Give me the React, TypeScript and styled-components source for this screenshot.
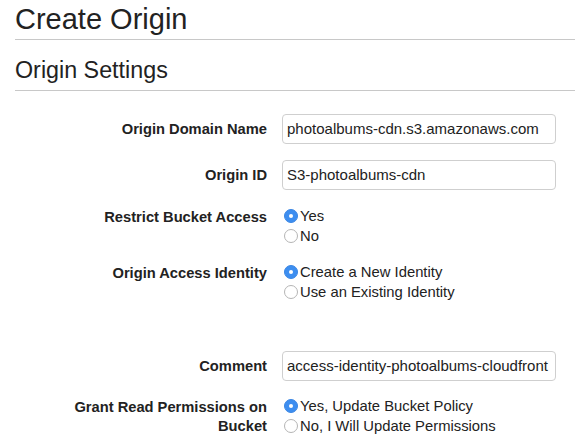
import React from "react";
import styled, { createGlobalStyle } from "styled-components";

const Global = createGlobalStyle`
  html, body { margin: 0; padding: 0; background: #ffffff; }
  body { font-family: "Liberation Sans", Arial, sans-serif; color: #222; }
`;

const Page = styled.div`
  width: 575px;
  height: 444px;
  overflow: hidden;
  padding-left: 15px;
  box-sizing: border-box;
`;

const Title = styled.h1`
  margin: 0;
  padding-top: 2px;
  height: 37px;
  font-size: 29px;
  font-weight: normal;
  line-height: 34px;
  color: #222;
  border-bottom: 1px solid #c8c8c8;
`;

const SectionTitle = styled.h2`
  margin: 0;
  padding-top: 16px;
  height: 34px;
  font-size: 23.3px;
  font-weight: normal;
  line-height: 28px;
  color: #222;
  border-bottom: 1px solid #c8c8c8;
`;

const Form = styled.div`
  display: flex;
  flex-direction: column;
  padding-top: 23px;
`;

const Row = styled.div<{ $top?: number; $center?: boolean }>`
  display: grid;
  grid-template-columns: 200px 274px;
  column-gap: 15px;
  margin-left: 52px;
  margin-top: ${(p) => p.$top ?? 16}px;
  align-items: ${(p) => (p.$center ? "center" : "start")};
`;

const Label = styled.div<{ $pad?: number }>`
  text-align: right;
  font-weight: bold;
  font-size: 14.7px;
  line-height: 19px;
  color: #222;
  padding-top: ${(p) => p.$pad ?? 0}px;
`;

const TextInput = styled.div`
  height: 30px;
  box-sizing: border-box;
  border: 1px solid #cfcfcf;
  border-radius: 4px;
  padding: 0 4px;
  font-size: 15px;
  line-height: 28px;
  color: #222;
  white-space: nowrap;
  overflow: hidden;
`;

const RadioGroup = styled.div`
  display: flex;
  flex-direction: column;
  padding-left: 2px;
`;

const RadioOption = styled.div`
  display: flex;
  align-items: center;
  height: 20px;
  font-size: 14.8px;
  color: #222;
  white-space: nowrap;
`;

const Circle = styled.span<{ $checked?: boolean }>`
  width: 14px;
  height: 14px;
  box-sizing: border-box;
  border-radius: 50%;
  margin-right: 2px;
  flex: none;
  display: flex;
  align-items: center;
  justify-content: center;
  background: ${(p) => (p.$checked ? "#3d8ef0" : "#fff")};
  border: 1px solid ${(p) => (p.$checked ? "#3a86e4" : "#b5b5b5")};
  &::after {
    content: "";
    width: 4px;
    height: 4px;
    border-radius: 50%;
    background: #fff;
    display: ${(p) => (p.$checked ? "block" : "none")};
  }
`;

const Radio = ({ checked, children }: { checked?: boolean; children: React.ReactNode }) => (
  <RadioOption>
    <Circle $checked={checked} />
    {children}
  </RadioOption>
);

export default function App() {
  return (
    <Page>
      <Global />
      <Title>Create Origin</Title>
      <SectionTitle>Origin Settings</SectionTitle>
      <Form>
        <Row $top={0} $center>
          <Label>Origin Domain Name</Label>
          <TextInput>photoalbums-cdn.s3.amazonaws.com</TextInput>
        </Row>
        <Row $top={16} $center>
          <Label>Origin ID</Label>
          <TextInput>S3-photoalbums-cdn</TextInput>
        </Row>
        <Row $top={16}>
          <Label $pad={2}>Restrict Bucket Access</Label>
          <RadioGroup>
            <Radio checked>Yes</Radio>
            <Radio>No</Radio>
          </RadioGroup>
        </Row>
        <Row $top={16}>
          <Label $pad={2}>Origin Access Identity</Label>
          <RadioGroup>
            <Radio checked>Create a New Identity</Radio>
            <Radio>Use an Existing Identity</Radio>
          </RadioGroup>
        </Row>
        <Row $top={49} $center>
          <Label>Comment</Label>
          <TextInput>access-identity-photoalbums-cloudfront</TextInput>
        </Row>
        <Row $top={15}>
          <Label $pad={2}>Grant Read Permissions on Bucket</Label>
          <RadioGroup>
            <Radio checked>Yes, Update Bucket Policy</Radio>
            <Radio>No, I Will Update Permissions</Radio>
          </RadioGroup>
        </Row>
      </Form>
    </Page>
  );
}
